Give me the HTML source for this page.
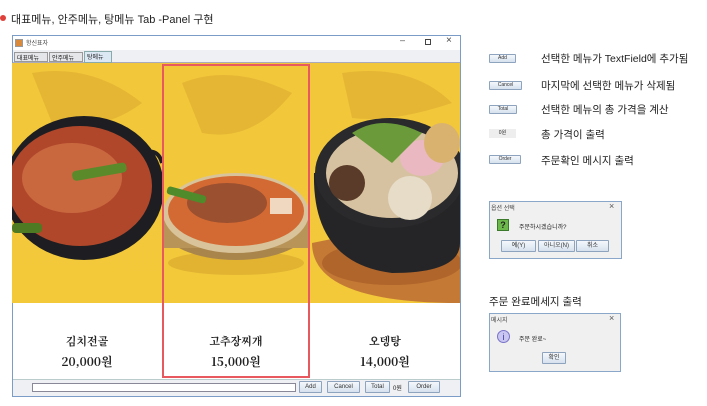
<!DOCTYPE html><html><head><meta charset="utf-8"><style>
*{margin:0;padding:0;box-sizing:border-box}
body{width:707px;height:406px;background:#fff;position:relative;overflow:hidden;font-family:"Liberation Sans","Noto Sans CJK KR",sans-serif;color:#222}
.a{position:absolute}
.btn{position:absolute;border:1px solid #8ea3bd;background:linear-gradient(#f4f8fc,#d6e1ee);font-size:6px;text-align:center;color:#333;border-radius:1px}
.lbl{position:absolute;font-size:10.5px;color:#222}
.ser{font-family:"Noto Serif CJK SC","Noto Sans CJK KR",serif;font-weight:bold}
</style></head><body>
<div class="a" style="left:0;top:15px;width:6px;height:6px;border-radius:50%;background:#e0403a"></div>
<div class="a" style="left:11px;top:11px;font-size:11px">대표메뉴, 안주메뉴, 탕메뉴 Tab -Panel 구현</div>

<!-- window -->
<div class="a" style="left:12px;top:35px;width:449px;height:362px;border:1px solid #7a9cc6;background:#fff"></div>
<div class="a" style="left:15px;top:39px;width:8px;height:8px;background:#d98a3a;border:1px solid #999"></div>
<div class="a" style="left:26px;top:38px;font-size:6px;color:#444">항신표자</div>
<div class="a" style="left:400px;top:35px;font-size:9px;color:#444">–</div>
<div class="a" style="left:425px;top:39px;width:6px;height:6px;border:1px solid #444"></div>
<div class="a" style="left:446px;top:35px;font-size:10px;color:#444">×</div>
<div class="a" style="left:13px;top:50px;width:447px;height:13px;background:#eef0f3;border-bottom:1px solid #aab"></div>
<div class="a" style="left:14px;top:52px;width:34px;height:10px;border:1px solid #999;background:#e4e6ea;font-size:6px;padding-left:2px">대표메뉴</div>
<div class="a" style="left:49px;top:52px;width:34px;height:10px;border:1px solid #999;background:#e4e6ea;font-size:6px;padding-left:2px">안주메뉴</div>
<div class="a" style="left:84px;top:51px;width:28px;height:12px;border:1px solid #8aa;background:#dde8f5;font-size:6px;padding-left:2px">탕메뉴</div>

<svg class="a" style="left:12px;top:63px" width="448" height="240" viewBox="0 0 448 240">
<defs><linearGradient id="y" x1="0" y1="0" x2="0" y2="1"><stop offset="0" stop-color="#f2c73a"/><stop offset="1" stop-color="#f3c93a"/></linearGradient></defs>
<rect width="448" height="240" fill="url(#y)"/>
<path d="M20 10 Q80 0 130 40 Q90 70 40 60Z M170 20 Q220 0 280 30 Q240 80 190 70Z M330 10 Q400 0 440 40 Q380 60 340 55Z" fill="#dcaa30" opacity=".6"/>
<!-- left pot -->
<ellipse cx="72" cy="125" rx="80" ry="72" fill="#1e1e22"/>
<path d="M120 95 Q145 80 150 100" stroke="#1e1e22" stroke-width="4" fill="none"/>
<ellipse cx="68" cy="123" rx="72" ry="60" fill="#b0472a"/>
<ellipse cx="60" cy="115" rx="50" ry="35" fill="#c9683f"/>
<rect x="60" y="105" width="55" height="10" rx="4" fill="#5b8a2a" transform="rotate(-10 80 110)"/>
<rect x="0" y="160" width="30" height="10" rx="4" fill="#4d7a22"/>
<!-- middle pan -->
<ellipse cx="224" cy="200" rx="68" ry="12" fill="#d6a52c" opacity=".6"/>
<ellipse cx="224" cy="165" rx="73" ry="32" fill="#a9854c"/>
<rect x="151" y="150" width="146" height="35" fill="#b89458"/>
<ellipse cx="224" cy="150" rx="73" ry="40" fill="#d9c39a"/>
<ellipse cx="224" cy="148" rx="68" ry="35" fill="#d46a33"/>
<ellipse cx="215" cy="140" rx="40" ry="20" fill="#9b5030"/>
<rect x="155" y="128" width="40" height="8" rx="3" fill="#4f8a2b" transform="rotate(15 175 130)"/>
<rect x="258" y="135" width="22" height="16" fill="#f0d8c0"/>
<!-- right pot -->
<path d="M300 180 Q300 240 448 240 L448 150 Z" fill="#c47a35"/>
<ellipse cx="380" cy="200" rx="70" ry="22" fill="#b0652b"/>
<path d="M302 110 Q300 200 380 210 Q448 210 448 180 L448 110Z" fill="#252528"/>
<ellipse cx="378" cy="110" rx="75" ry="55" fill="#2a2a2c"/>
<ellipse cx="380" cy="110" rx="66" ry="45" fill="#d6c2a0"/>
<circle cx="335" cy="120" r="18" fill="#5a3a28"/>
<circle cx="398" cy="135" r="22" fill="#e6dcc8"/>
<ellipse cx="410" cy="95" rx="22" ry="18" fill="#e9b8c0"/>
<path d="M340 70 Q370 50 410 70 L380 100Z" fill="#6a9a3a"/>
<ellipse cx="430" cy="80" rx="18" ry="20" fill="#d9b270"/>
</svg>
<div class="a" style="left:162px;top:64px;width:148px;height:314px;border:2px solid #e8595f"></div>
<div class="a ser" style="left:12px;top:333px;width:150px;text-align:center;font-size:11px">김치전골</div>
<div class="a ser" style="left:12px;top:353px;width:150px;text-align:center;font-size:12px">20,000원</div>
<div class="a ser" style="left:162px;top:333px;width:148px;text-align:center;font-size:11px">고추장찌개</div>
<div class="a ser" style="left:162px;top:353px;width:148px;text-align:center;font-size:12px">15,000원</div>
<div class="a ser" style="left:310px;top:333px;width:150px;text-align:center;font-size:11px">오뎅탕</div>
<div class="a ser" style="left:310px;top:353px;width:150px;text-align:center;font-size:12px">14,000원</div>
<div class="a" style="left:13px;top:379px;width:447px;height:17px;background:#eef0f3;border-top:1px solid #bcc"></div>
<div class="a" style="left:32px;top:383px;width:264px;height:9px;border:1px solid #889;background:#fff"></div>
<div class="btn" style="left:299px;top:381px;width:23px;height:12px;line-height:10px">Add</div>
<div class="btn" style="left:327px;top:381px;width:33px;height:12px;line-height:10px">Cancel</div>
<div class="btn" style="left:365px;top:381px;width:25px;height:12px;line-height:10px">Total</div>
<div class="a" style="left:393px;top:383px;font-size:6px">0원</div>
<div class="btn" style="left:408px;top:381px;width:32px;height:12px;line-height:10px">Order</div>

<!-- legend -->
<div class="btn" style="left:489px;top:54px;width:27px;height:9px;line-height:7px;font-size:5px">Add</div>
<div class="lbl" style="left:541px;top:51px">선택한 메뉴가 TextField에 추가됨</div>
<div class="btn" style="left:489px;top:81px;width:33px;height:9px;line-height:7px;font-size:5px">Cancel</div>
<div class="lbl" style="left:541px;top:78px">마지막에 선택한 메뉴가 삭제됨</div>
<div class="btn" style="left:489px;top:105px;width:28px;height:9px;line-height:7px;font-size:5px">Total</div>
<div class="lbl" style="left:541px;top:102px">선택한 메뉴의 총 가격을 계산</div>
<div class="a" style="left:489px;top:129px;width:27px;height:9px;background:#eee;font-size:5px;text-align:center;line-height:9px">0원</div>
<div class="lbl" style="left:541px;top:127px">총 가격이 출력</div>
<div class="btn" style="left:489px;top:155px;width:32px;height:9px;line-height:7px;font-size:5px">Order</div>
<div class="lbl" style="left:541px;top:153px">주문확인 메시지 출력</div>

<!-- dialog 1 -->
<div class="a" style="left:489px;top:201px;width:133px;height:58px;border:1px solid #8aa6c8;background:#f0f0f0"></div>
<div class="a" style="left:491px;top:203px;font-size:6px;color:#444">옵션 선택</div>
<div class="a" style="left:609px;top:201px;font-size:9px;color:#555">×</div>
<div class="a" style="left:497px;top:219px;width:12px;height:12px;background:#6cb84a;border:1px solid #3a7a2a;font-size:9px;font-weight:bold;text-align:center;line-height:11px;color:#222">?</div>
<div class="a" style="left:519px;top:222px;font-size:6px">주문하시겠습니까?</div>
<div class="btn" style="left:501px;top:240px;width:35px;height:12px;line-height:10px">예(Y)</div>
<div class="btn" style="left:538px;top:240px;width:37px;height:12px;line-height:10px">아니오(N)</div>
<div class="btn" style="left:576px;top:240px;width:33px;height:12px;line-height:10px">취소</div>

<div class="lbl" style="left:489px;top:294px">주문 완료메세지 출력</div>
<!-- dialog 2 -->
<div class="a" style="left:489px;top:313px;width:132px;height:59px;border:1px solid #8aa6c8;background:#f0f0f0"></div>
<div class="a" style="left:491px;top:315px;font-size:6px;color:#444">메시지</div>
<div class="a" style="left:609px;top:313px;font-size:9px;color:#555">×</div>
<div class="a" style="left:497px;top:330px;width:13px;height:13px;border-radius:50%;background:#c9c6f2;border:1px solid #7a74c8;font-size:9px;text-align:center;line-height:12px;color:#3a3a9a">i</div>
<div class="a" style="left:519px;top:334px;font-size:6px">주문 완료~</div>
<div class="btn" style="left:542px;top:352px;width:24px;height:12px;line-height:10px">확인</div>
</body></html>
